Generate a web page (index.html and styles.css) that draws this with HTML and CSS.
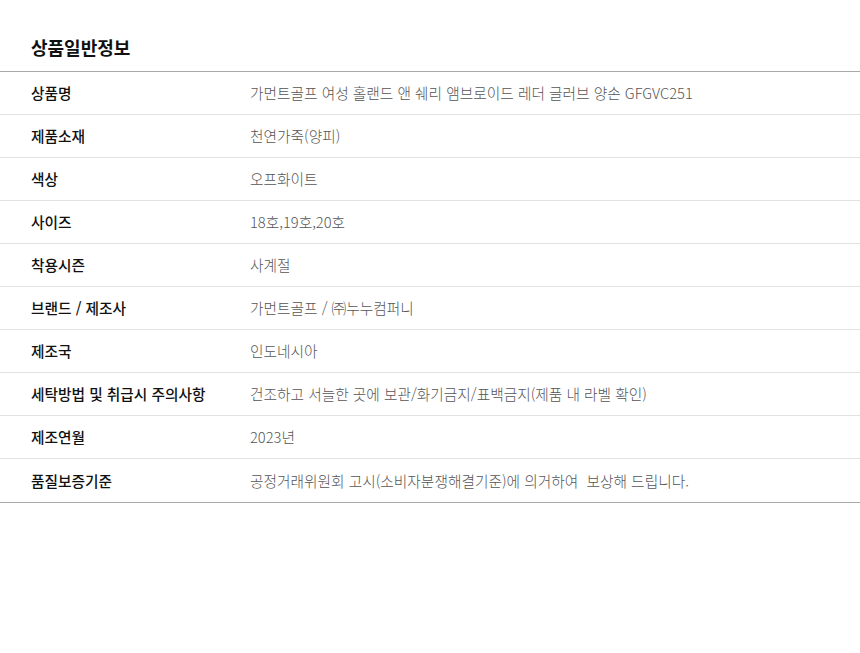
FILE: index.html
```html
<!DOCTYPE html>
<html lang="ko">
<head>
<meta charset="utf-8">
<link rel="stylesheet" href="styles.css">
</head>
<body>
<section class="info">
  <h2 class="info-title">상품일반정보</h2>
  <table class="info-table">
    <tbody>
      <tr><th>상품명</th><td>가먼트골프 여성 홀랜드 앤 쉐리 앰브로이드 레더 글러브 양손 GFGVC251</td></tr>
      <tr><th>제품소재</th><td>천연가죽(양피)</td></tr>
      <tr><th>색상</th><td>오프화이트</td></tr>
      <tr><th>사이즈</th><td>18호,19호,20호</td></tr>
      <tr><th>착용시즌</th><td>사계절</td></tr>
      <tr><th>브랜드 / 제조사</th><td>가먼트골프 / ㈜누누컴퍼니</td></tr>
      <tr><th>제조국</th><td>인도네시아</td></tr>
      <tr><th>세탁방법 및 취급시 주의사항</th><td>건조하고 서늘한 곳에 보관/화기금지/표백금지(제품 내 라벨 확인)</td></tr>
      <tr><th>제조연월</th><td>2023년</td></tr>
      <tr class="last"><th>품질보증기준</th><td>공정거래위원회 고시(소비자분쟁해결기준)에 의거하여&nbsp; 보상해 드립니다.</td></tr>
    </tbody>
  </table>
</section>
</body>
</html>
```
FILE: styles.css
```css
html, body {
  margin: 0;
  padding: 0;
  background: #fff;
}
body {
  font-family: "Noto Sans CJK KR", "Noto Sans", sans-serif;
  color: #111;
}
.info-title {
  margin: 0;
  padding: 34px 0 11px 31px;
  font-size: 18px;
  line-height: 26px;
  font-weight: 700;
  color: #111;
}
.info-table {
  width: 100%;
  border-collapse: collapse;
  border-top: 1px solid #a8a8a8;
}
.info-table th,
.info-table td {
  height: 42px;
  padding: 0;
  font-size: 14.7px;
  line-height: 20px;
  text-align: left;
  vertical-align: middle;
  border-bottom: 1px solid #e2e2e2;
}
.info-table .last th,
.info-table .last td {
  height: 43px;
  border-bottom: 1px solid #a8a8a8;
}
.info-table th {
  width: 219px;
  padding-left: 31px;
  font-weight: 500;
  color: #111;
}
.info-table td {
  font-weight: 300;
  color: #555;
}
```
